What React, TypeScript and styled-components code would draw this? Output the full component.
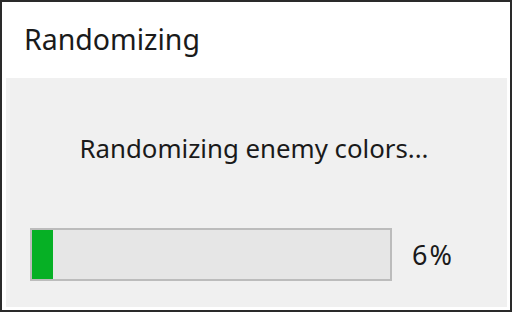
import React from "react";
import styled, { createGlobalStyle } from "styled-components";

const Global = createGlobalStyle`
  html, body { margin: 0; padding: 0; background: #ffffff; }
  body { font-family: "Noto Sans", "Open Sans", sans-serif; }
`;

const Window = styled.div`
  box-sizing: border-box;
  width: 512px;
  height: 312px;
  border: 2px solid #2a2a2a;
  background: #ffffff;
  display: flex;
  flex-direction: column;
  padding: 0 3px 3px 4px;
`;

const TitleBar = styled.div`
  height: 76px;
  display: flex;
  align-items: center;
  padding-left: 18px;
  padding-bottom: 2px;
  box-sizing: border-box;
  font-size: 28.5px;
  color: #1a1a1a;
`;

const Panel = styled.div`
  flex: 1;
  background: #f0f0f0;
  display: flex;
  flex-direction: column;
  padding: 0 0 0 24px;
`;

const Message = styled.div`
  margin-top: 50px;
  height: 40px;
  display: flex;
  align-items: center;
  justify-content: center;
  font-size: 25.8px;
  color: #1a1a1a;
  padding-right: 29px;
`;

const ProgressRow = styled.div`
  margin-top: 60px;
  display: flex;
  align-items: center;
`;

const Track = styled.div`
  box-sizing: border-box;
  width: 362px;
  height: 53px;
  border: 2px solid #bcbcbc;
  background: #e6e6e6;
  display: flex;
`;

const Fill = styled.div`
  height: 100%;
  background: #06b025;
`;

const Percent = styled.div`
  margin-left: 20px;
  font-size: 27px;
  letter-spacing: 2px;
  color: #1a1a1a;
`;

export default function App() {
  const pct = 6;
  return (
    <>
      <Global />
      <Window>
        <TitleBar>Randomizing</TitleBar>
        <Panel>
          <Message>Randomizing enemy colors...</Message>
          <ProgressRow>
            <Track>
              <Fill style={{ width: `${pct}%` }} />
            </Track>
            <Percent>{pct}%</Percent>
          </ProgressRow>
        </Panel>
      </Window>
    </>
  );
}
